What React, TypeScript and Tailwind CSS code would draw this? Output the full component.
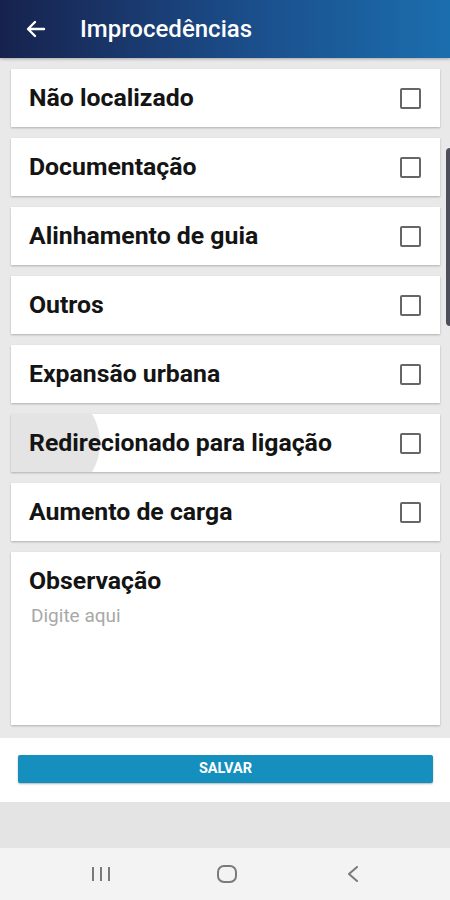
import { useState } from 'react'

const options = [
  'Não localizado',
  'Documentação',
  'Alinhamento de guia',
  'Outros',
  'Expansão urbana',
  'Redirecionado para ligação',
  'Aumento de carga',
]

function Checkbox({ checked, onClick }: { checked: boolean; onClick: () => void }) {
  return (
    <button
      onClick={onClick}
      className="w-[21px] h-[21px] border-2 border-[#666666] rounded-[2px] flex items-center justify-center bg-white"
    >
      {checked && (
        <svg viewBox="0 0 24 24" className="w-4 h-4" fill="none" stroke="#1590be" strokeWidth={3}>
          <path d="M5 12l5 5 9-10" />
        </svg>
      )}
    </button>
  )
}

export default function App() {
  const [checked, setChecked] = useState<boolean[]>(options.map(() => false))

  return (
    <div className="w-[450px] h-[900px] flex flex-col bg-[#e9e9e9] relative overflow-hidden font-['Roboto',sans-serif]">
      {/* Header */}
      <div className="h-[58px] shrink-0 flex items-center bg-gradient-to-r from-[#16224d] via-[#1a4a86] to-[#1b6eae] shadow-[0_1px_3px_rgba(0,0,0,0.3)]">
        <svg viewBox="0 0 24 24" className="w-[24px] h-[24px] ml-[24px]" fill="none" stroke="white" strokeWidth={2.4} strokeLinecap="round" strokeLinejoin="round">
          <path d="M20 12H4.5M11 5l-7 7 7 7" />
        </svg>
        <span className="ml-[32px] text-white text-[24px] leading-[30px] font-medium">Improcedências</span>
      </div>

      {/* Options */}
      <div className="flex flex-col gap-[11px] px-[11px] pt-[11px] pr-[10px]">
        {options.map((label, i) => (
          <div
            key={label}
            className="relative h-[58px] bg-white flex items-center justify-between pl-[18px] pr-[19px] overflow-hidden shadow-[0_1px_2px_rgba(0,0,0,0.25)]"
          >
            {i === 5 && (
              <div className="absolute left-[-25px] top-[-28px] w-[114px] h-[114px] rounded-full bg-[#e4e4e4]" />
            )}
            <span className="relative text-[24.8px] leading-[30px] font-bold text-[#141414]">{label}</span>
            <Checkbox
              checked={checked[i]}
              onClick={() => setChecked(checked.map((c, j) => (j === i ? !c : c)))}
            />
          </div>
        ))}

        {/* Observação */}
        <div className="h-[173px] bg-white px-[18px] pt-[14px] flex flex-col shadow-[0_1px_2px_rgba(0,0,0,0.25)]">
          <span className="text-[24.8px] leading-[30px] font-bold text-[#141414]">Observação</span>
          <textarea
            placeholder="Digite aqui"
            className="mt-[8px] ml-[2px] text-[19px] leading-[24px] text-[#333] placeholder:text-[#a8a8a8] outline-none resize-none flex-1"
          />
        </div>
      </div>

      {/* Save area */}
      <div className="mt-[13px] h-[64px] bg-white px-[18px] pt-[17px] pr-[17px]">
        <button className="w-full h-[28px] bg-[#1590be] rounded-[2px] text-white text-[14.5px] leading-[28px] font-bold shadow-[0_1px_2px_rgba(0,0,0,0.3)]">
          SALVAR
        </button>
      </div>

      <div className="flex-1 bg-[#e4e4e4]" />

      {/* Android nav bar */}
      <div className="h-[52px] shrink-0 bg-[#f3f3f3] flex items-center pl-[38px]">
        <div className="w-[126px] flex justify-center">
          <svg viewBox="0 0 18 16" className="w-[18px] h-[16px]" fill="none" stroke="#7a7a7a" strokeWidth={2}>
            <path d="M1 1v14M9 1v14M17 1v14" />
          </svg>
        </div>
        <div className="w-[126px] flex justify-center">
          <svg viewBox="0 0 20 18" className="w-[20px] h-[18px]" fill="none" stroke="#7a7a7a" strokeWidth={2}>
            <rect x="1" y="1" width="18" height="16" rx="6" />
          </svg>
        </div>
        <div className="w-[126px] flex justify-center">
          <svg viewBox="0 0 12 16" className="w-[12px] h-[16px]" fill="none" stroke="#7a7a7a" strokeWidth={2} strokeLinecap="round" strokeLinejoin="round">
            <path d="M10 1L2 8l8 7" />
          </svg>
        </div>
      </div>

      {/* Scrollbar */}
      <div className="absolute right-0 top-[148px] w-[4px] h-[178px] rounded-l-full bg-[#4d4d5c]" />
    </div>
  )
}
